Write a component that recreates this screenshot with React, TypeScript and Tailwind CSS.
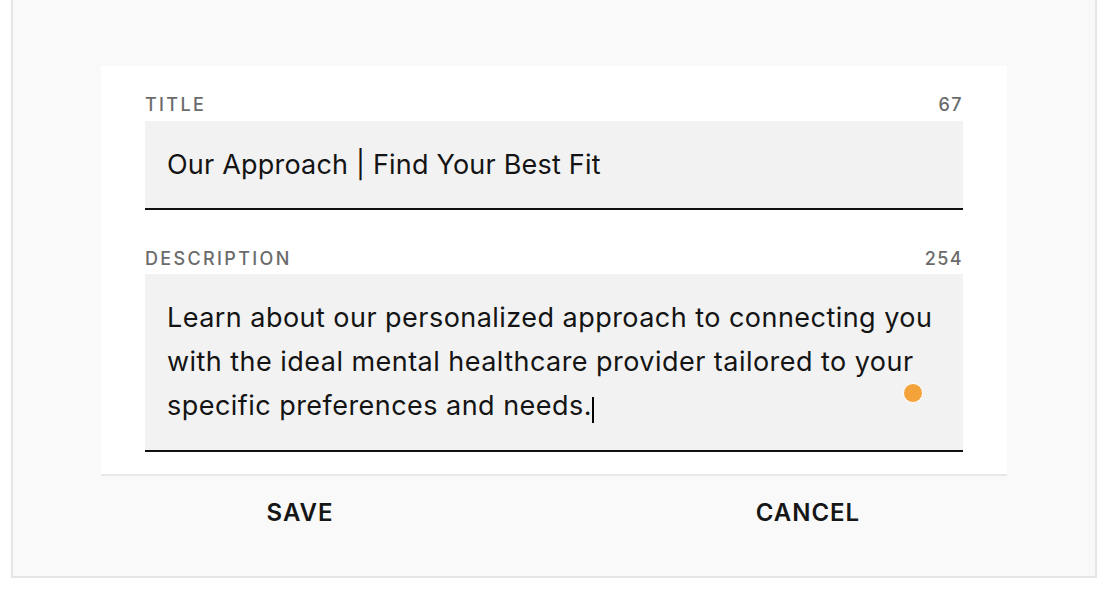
const FONT = { fontFamily: "Inter, 'Noto Sans', sans-serif" };

function FieldLabel({ label, count, className = "" }: { label: string; count: number; className?: string }) {
  return (
    <div className={`flex items-center justify-between h-[24px] text-[18px] leading-[24px] font-medium tracking-[0.13em] text-[#6b6b6b] ${className}`}>
      <span>{label}</span>
      <span className="tracking-[0.08em]">{count}</span>
    </div>
  );
}

export default function App() {
  return (
    <div className="w-[1104px] h-[596px] bg-white overflow-hidden" style={FONT}>
      <div className="ml-[11px] w-[1086px] h-[578px] bg-[#f9f9f9] border-x-2 border-b-2 border-[#e6e6e6] pt-[66px]">
        <div className="mx-auto w-[906px] bg-white border-b-2 border-[#e8e8e8] px-[44px] pt-[27px] pb-[22px]">
          <FieldLabel label="TITLE" count={67} className="mb-[4px]" />
          <div className="bg-[#f2f2f2] border-b-2 border-[#111] px-[22px] pt-[22px] pb-[21px] text-[27px] leading-[44px] tracking-[0.2px] text-[#141414]">
            Our Approach | Find Your Best Fit
          </div>

          <FieldLabel label="DESCRIPTION" count={254} className="mt-[37px] mb-[3px]" />
          <div className="relative bg-[#f2f2f2] border-b-2 border-[#111] px-[22px] py-[22px] text-[27px] leading-[44px] tracking-[0.46px] text-[#141414]">
            <p className="pr-[4px]">
              Learn about our personalized approach to connecting you with the ideal mental healthcare provider tailored to your specific preferences and needs.
              <span className="inline-block w-[2px] h-[26px] bg-black align-[-8px]" />
            </p>
            <span className="absolute right-[40px] top-[109px] w-[20px] h-[20px] rounded-full bg-[#f4a33b] border-[1.5px] border-white" />
          </div>
        </div>

        <div className="flex justify-center mt-[21px]">
          <button className="w-[508px] text-[24px] leading-[32px] font-semibold tracking-[0.04em] text-[#161616]">SAVE</button>
          <button className="w-[508px] text-[24px] leading-[32px] font-semibold tracking-[0.04em] text-[#161616]">CANCEL</button>
        </div>
      </div>
    </div>
  );
}
